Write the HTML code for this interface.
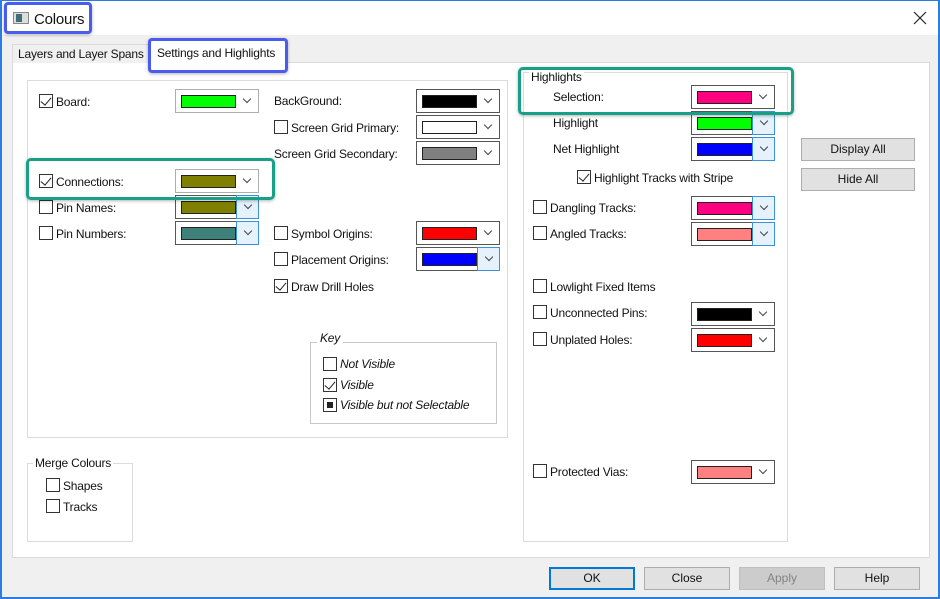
<!DOCTYPE html>
<html><head><meta charset="utf-8"><style>
*{box-sizing:border-box;margin:0;padding:0}
body{width:940px;height:599px;background:#fff;font-family:"Liberation Sans",sans-serif;font-size:12px;color:#111;position:relative;overflow:hidden}
.a{position:absolute}
.t{position:absolute;white-space:nowrap;line-height:14px;letter-spacing:-0.2px}
.cb{position:absolute;width:14px;height:14px;border:1px solid #333;background:#fff}
.ck::after{content:"";position:absolute;left:3px;top:0px;width:5px;height:9px;border-right:1.3px solid #222;border-bottom:1.3px solid #222;transform:rotate(40deg)}
.cmb{position:absolute;width:84px;height:24px;border:1px solid #555;background:#fff}
.cmb.l{border-color:#adadad}
.sw{position:absolute;left:5px;top:5px;width:55px;height:13px;border:1px solid #222}
.chev{position:absolute;right:8px;top:6px;width:6px;height:6px;border-right:1px solid #444;border-bottom:1px solid #444;transform:rotate(45deg)}
.btn{position:absolute;right:-1px;top:-1px;width:23px;height:24px;border:1px solid #3c8fd9;background:#e5f1fb}
.btn .chev{right:7px}
.grp{position:absolute;border:1px solid #dcdcdc}
.pb{position:absolute;height:23px;border:1px solid #adadad;background:#e1e1e1;text-align:center;line-height:21px}
.blue{position:absolute;border:3px solid #4a5cf0;border-radius:4px;box-shadow:0 1px 3px rgba(0,0,0,.3)}
.green{position:absolute;border:3px solid #17a086;border-radius:5px;box-shadow:0 1px 3px rgba(0,0,0,.3)}
</style></head><body>
<div class="a" style="left:0;top:0;width:940px;height:599px;border:1px solid #2b7de0;border-width:1px 2px 2px 2px"></div>
<div class="a" style="left:2px;top:35px;width:936px;height:562px;background:#f0f0f0"></div>
<div class="a" style="left:13px;top:12px;width:16px;height:12px;border:1px solid #888;background:#ddd"></div>
<div class="a" style="left:16px;top:14px;width:6px;height:8px;background:#3e6f76"></div>
<div class="t" style="left:34px;top:11px;font-size:15px;line-height:17px">Colours</div>
<svg class="a" style="left:913px;top:11px" width="14" height="14"><path d="M1 1L13 13M13 1L1 13" stroke="#222" stroke-width="1.2"/></svg>
<div class="a" style="left:12px;top:62px;width:918px;height:496px;background:#fff;border:1px solid #dadada"></div>
<div class="a" style="left:12px;top:44px;width:140px;height:19px;border:1px solid #dadada;border-bottom:none;background:#f0f0f0"></div>
<div class="t" style="left:18px;top:47px">Layers and Layer Spans</div>
<div class="a" style="left:150px;top:40px;width:137px;height:24px;background:#fff;border:1px solid #dadada;border-bottom:none"></div>
<div class="t" style="left:157px;top:46px">Settings and Highlights</div>
<div class="grp" style="left:27px;top:80px;width:481px;height:358px"></div>
<div class="cb ck" style="left:39px;top:94px"></div><div class="t" style="left:56px;top:95px">Board:</div>
<div class="cmb l" style="left:175px;top:89px"><div class="sw" style="background:#00ff00"></div><div class="chev"></div></div>
<div class="cb ck" style="left:39px;top:174px"></div><div class="t" style="left:56px;top:175px">Connections:</div>
<div class="cmb l" style="left:175px;top:169px"><div class="sw" style="background:#808000"></div><div class="chev"></div></div>
<div class="cb" style="left:39px;top:200px"></div><div class="t" style="left:56px;top:201px">Pin Names:</div>
<div class="cmb" style="left:175px;top:195px"><div class="sw" style="background:#808000"></div><div class="btn"><div class="chev"></div></div></div>
<div class="cb" style="left:39px;top:226px"></div><div class="t" style="left:56px;top:227px">Pin Numbers:</div>
<div class="cmb" style="left:175px;top:221px"><div class="sw" style="background:#3e807a"></div><div class="btn"><div class="chev"></div></div></div>
<div class="t" style="left:274px;top:94px">BackGround:</div>
<div class="cmb" style="left:416px;top:89px"><div class="sw" style="background:#000"></div><div class="chev"></div></div>
<div class="cb" style="left:274px;top:120px"></div><div class="t" style="left:291px;top:121px">Screen Grid Primary:</div>
<div class="cmb" style="left:416px;top:115px"><div class="sw" style="background:#fff"></div><div class="chev"></div></div>
<div class="t" style="left:274px;top:147px">Screen Grid Secondary:</div>
<div class="cmb" style="left:416px;top:141px"><div class="sw" style="background:#808080"></div><div class="chev"></div></div>
<div class="cb" style="left:274px;top:226px"></div><div class="t" style="left:291px;top:227px">Symbol Origins:</div>
<div class="cmb" style="left:416px;top:221px"><div class="sw" style="background:#ff0000"></div><div class="chev"></div></div>
<div class="cb" style="left:274px;top:252px"></div><div class="t" style="left:291px;top:253px">Placement Origins:</div>
<div class="cmb" style="left:416px;top:247px"><div class="sw" style="background:#0000ff"></div><div class="btn"><div class="chev"></div></div></div>
<div class="cb ck" style="left:274px;top:279px"></div><div class="t" style="left:291px;top:280px">Draw Drill Holes</div>
<div class="grp" style="left:310px;top:342px;width:187px;height:82px;border-color:#c8c8c8"></div>
<div class="t" style="left:317px;top:331px;background:#fff;padding:0 3px;font-style:italic">Key</div>
<div class="cb" style="left:323px;top:357px"></div><div class="t" style="left:340px;top:357px;font-style:italic">Not Visible</div>
<div class="cb ck" style="left:323px;top:378px"></div><div class="t" style="left:340px;top:378px;font-style:italic">Visible</div>
<div class="cb" style="left:323px;top:398px"><div class="a" style="left:3px;top:3px;width:6px;height:6px;background:#222"></div></div><div class="t" style="left:340px;top:398px;font-style:italic">Visible but not Selectable</div>
<div class="grp" style="left:27px;top:463px;width:106px;height:79px"></div>
<div class="t" style="left:33px;top:456px;background:#fff;padding:0 2px">Merge Colours</div>
<div class="cb" style="left:46px;top:478px"></div><div class="t" style="left:63px;top:479px">Shapes</div>
<div class="cb" style="left:46px;top:499px"></div><div class="t" style="left:63px;top:500px">Tracks</div>
<div class="grp" style="left:523px;top:72px;width:265px;height:470px"></div>
<div class="t" style="left:529px;top:70px;background:#fff;padding:0 2px">Highlights</div>
<div class="t" style="left:553px;top:90px">Selection:</div>
<div class="cmb" style="left:691px;top:85px"><div class="sw" style="background:#ff0080"></div><div class="chev"></div></div>
<div class="t" style="left:553px;top:116px">Highlight</div>
<div class="cmb" style="left:691px;top:111px"><div class="sw" style="background:#00ff00"></div><div class="btn"><div class="chev"></div></div></div>
<div class="t" style="left:553px;top:142px">Net Highlight</div>
<div class="cmb" style="left:691px;top:137px"><div class="sw" style="background:#0000ff"></div><div class="btn"><div class="chev"></div></div></div>
<div class="cb ck" style="left:577px;top:170px"></div><div class="t" style="left:594px;top:171px">Highlight Tracks with Stripe</div>
<div class="cb" style="left:533px;top:200px"></div><div class="t" style="left:550px;top:201px">Dangling Tracks:</div>
<div class="cmb" style="left:691px;top:196px"><div class="sw" style="background:#ff0080"></div><div class="btn"><div class="chev"></div></div></div>
<div class="cb" style="left:533px;top:226px"></div><div class="t" style="left:550px;top:227px">Angled Tracks:</div>
<div class="cmb" style="left:691px;top:222px"><div class="sw" style="background:#ff8080"></div><div class="btn"><div class="chev"></div></div></div>
<div class="cb" style="left:533px;top:279px"></div><div class="t" style="left:550px;top:280px">Lowlight Fixed Items</div>
<div class="cb" style="left:533px;top:305px"></div><div class="t" style="left:550px;top:306px">Unconnected Pins:</div>
<div class="cmb" style="left:691px;top:302px"><div class="sw" style="background:#000"></div><div class="chev"></div></div>
<div class="cb" style="left:533px;top:332px"></div><div class="t" style="left:550px;top:333px">Unplated Holes:</div>
<div class="cmb" style="left:691px;top:328px"><div class="sw" style="background:#ff0000"></div><div class="chev"></div></div>
<div class="cb" style="left:533px;top:464px"></div><div class="t" style="left:550px;top:465px">Protected Vias:</div>
<div class="cmb" style="left:691px;top:460px"><div class="sw" style="background:#ff8080"></div><div class="chev"></div></div>
<div class="pb" style="left:801px;top:138px;width:114px">Display All</div>
<div class="pb" style="left:801px;top:168px;width:114px">Hide All</div>
<div class="pb" style="left:549px;top:567px;width:86px;border:2px solid #0078d7;line-height:19px">OK</div>
<div class="pb" style="left:644px;top:567px;width:86px">Close</div>
<div class="pb" style="left:739px;top:567px;width:86px;background:#cccccc;border-color:#bfbfbf;color:#838383">Apply</div>
<div class="pb" style="left:834px;top:567px;width:86px">Help</div>
<div class="blue" style="left:4px;top:2px;width:88px;height:32px"></div>
<div class="blue" style="left:148px;top:38px;width:140px;height:35px"></div>
<div class="green" style="left:26px;top:158px;width:249px;height:42px"></div>
<div class="green" style="left:518px;top:67px;width:276px;height:48px"></div>
</body></html>
